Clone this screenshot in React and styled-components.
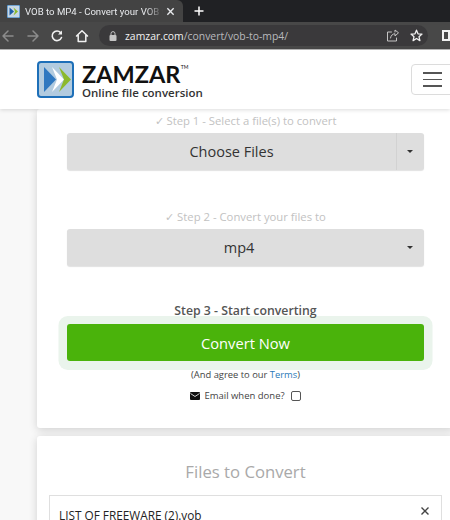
import React from "react";
import styled, { createGlobalStyle } from "styled-components";

const Global = createGlobalStyle`
  html, body { margin: 0; padding: 0; background: #f8f8f8; }
  body { width: 450px; height: 520px; overflow: hidden; font-family: "Open Sans", "Noto Sans", sans-serif; }
  * { box-sizing: border-box; }
`;

const Page = styled.div`
  width: 450px;
  height: 520px;
  overflow: hidden;
  display: flex;
  flex-direction: column;
`;

const TabStrip = styled.div`
  height: 22px;
  flex: none;
  background: #202124;
  display: flex;
  align-items: center;
`;

const Tab = styled.div`
  width: 183px;
  height: 22px;
  background: #434343;
  border-top-right-radius: 6px;
  display: flex;
  align-items: center;
  padding: 0 8px 0 7px;
  color: #e8eaed;
  font-family: "Roboto", sans-serif;
  font-size: 9.6px;
  white-space: nowrap;
`;

const TabTitle = styled.span`
  flex: 1;
  margin-left: 5px;
  margin-right: 3px;
  overflow: hidden;
  mask-image: linear-gradient(to right, #000 88%, transparent);
`;

const NewTab = styled.div`
  width: 32px;
  display: flex;
  justify-content: center;
  color: #fff;
`;

const Toolbar = styled.div`
  height: 28px;
  flex: none;
  background: #484848;
  border-bottom: 1px solid #b8b8b8;
  display: flex;
  align-items: center;
`;

const NavIcons = styled.div`
  width: 99px;
  flex: none;
  display: flex;
  align-items: center;
  gap: 10.5px;
  padding-left: 1px;
`;

const Address = styled.div`
  width: 329px;
  height: 21px;
  flex: none;
  border-radius: 11px;
  background: #3a393b;
  display: flex;
  align-items: center;
  padding: 0 5px 0 10px;
  font-size: 10.4px;
  color: #b9babd;
`;

const Url = styled.span`
  flex: 1;
  margin-left: 8px;
  b { color: #f1f1f1; font-weight: 400; }
`;

const AddressIcons = styled.div`
  display: flex;
  align-items: center;
  gap: 11px;
`;

const Side = styled.div`
  width: 10px;
  height: 11px;
  margin-left: 14px;
  flex: none;
  border: 2px solid #f1f1f1;
  border-right-width: 4px;
  background: #484848;
`;

const Header = styled.header`
  height: 59px;
  flex: none;
  background: #fff;
  box-shadow: 0 1px 4px rgba(0, 0, 0, 0.14);
  display: flex;
  align-items: center;
  justify-content: space-between;
  padding-left: 37px;
  position: relative;
  z-index: 2;
`;

const Brand = styled.div`
  display: flex;
  align-items: center;
  gap: 8px;
`;

const BrandText = styled.div`
  display: flex;
  flex-direction: column;
  margin-top: 2px;
  color: #111;
`;

const BrandName = styled.div`
  font-family: "Lato", sans-serif;
  font-weight: 700;
  font-size: 23.5px;
  line-height: 24px;
  position: relative;
  width: fit-content;
  sup {
    font-size: 5px;
    line-height: 6px;
    position: absolute;
    top: 2px;
    right: -8px;
    font-weight: 400;
  }
`;

const BrandTag = styled.div`
  font-family: "Open Sans", sans-serif;
  font-weight: 600;
  font-size: 11.5px;
  line-height: 13px;
  color: #333;
`;

const MenuButton = styled.div`
  width: 50px;
  height: 31px;
  margin-right: -11px;
  border: 1px solid #dcdcdc;
  border-radius: 4px;
  display: flex;
  flex-direction: column;
  justify-content: center;
  gap: 5px;
  padding-left: 11px;
  span { display: block; width: 19px; height: 1.5px; background: #555; }
`;

const Cards = styled.main`
  width: 417px;
  margin-left: 37px;
  display: flex;
  flex-direction: column;
  gap: 8px;
`;

const Card = styled.section`
  background: #fff;
  border-radius: 3px;
  box-shadow: 0 2px 9px rgba(0, 0, 0, 0.16);
`;

const ConvertCard = styled(Card)`
  height: 319px;
  padding: 4px 30px 0;
  display: flex;
  flex-direction: column;
`;

const StepLabel = styled.div`
  text-align: center;
  font-size: 11.3px;
  line-height: 16px;
  color: #c2c2c2;
  margin-top: ${(p) => p.$top}px;
  margin-bottom: 4px;
`;

const StepThree = styled.div`
  text-align: center;
  font-size: 12.3px;
  font-weight: 600;
  line-height: 16px;
  color: #555;
  margin-top: 37px;
  margin-bottom: 5px;
  position: relative;
  z-index: 1;
`;

const Select = styled.div`
  height: 37px;
  background: #dedede;
  border-radius: 3px;
  box-shadow: 0 1px 1px rgba(0, 0, 0, 0.12);
  display: flex;
  align-items: stretch;
  color: #333;
  font-size: 14.5px;
`;

const SelectLabel = styled.div`
  flex: 1;
  display: flex;
  align-items: center;
  justify-content: center;
`;

const Caret = styled.div`
  width: ${(p) => (p.$split ? "28px" : "13px")};
  border-left: ${(p) => (p.$split ? "1px solid #d2d2d2" : "none")};
  position: relative;
  &::after {
    content: "";
    position: absolute;
    right: 11px;
    top: 17px;
    border-top: 3px solid #333;
    border-left: 3px solid transparent;
    border-right: 3px solid transparent;
  }
`;

const ConvertButton = styled.div`
  height: 37px;
  background: #4ab30b;
  border-radius: 3px;
  box-shadow: 0 0.5px 0 8.5px #eaf4ec;
  color: #fff;
  font-size: 14.7px;
  display: flex;
  align-items: center;
  justify-content: center;
`;

const Terms = styled.div`
  margin-top: 6px;
  text-align: center;
  font-size: 9.4px;
  line-height: 15px;
  color: #444;
  position: relative;
  a { color: #2a7ab8; text-decoration: none; }
`;

const EmailRow = styled.div`
  margin-top: 6px;
  display: flex;
  align-items: center;
  justify-content: center;
  gap: 4px;
  font-size: 9.5px;
  line-height: 15px;
  color: #444;
`;

const Check = styled.span`
  width: 10px;
  height: 10px;
  margin-left: 2px;
  border: 1px solid #555;
  border-radius: 2px;
  background: #fff;
`;

const FilesCard = styled(Card)`
  height: 120px;
  padding: 26px 12px 0;
`;

const FilesTitle = styled.h2`
  margin: 0;
  text-align: center;
  font-size: 16.7px;
  font-weight: 400;
  line-height: 20px;
  color: #a9a9a9;
`;

const FileRow = styled.div`
  margin-top: 13px;
  height: 60px;
  border: 1px solid #dfdfdf;
  display: flex;
  align-items: flex-start;
  justify-content: space-between;
  padding: 10px 11px 0 9px;
  font-size: 11.8px;
  line-height: 18px;
  color: #222;
`;

const Logo = () => (
  <svg width="37" height="37" viewBox="0 0 37 37">
    <rect x="1" y="1" width="35" height="35" rx="3" fill="#b2cbdf" stroke="#1d6fb8" strokeWidth="2" />
    <path d="M7 6 L19 18.5 L7 31 Z" fill="#2f78c0" />
    <path d="M15 6 L27 18.5 L15 31 L20 18.5 Z" fill="#fff" />
    <path d="M22 6 L34 18.5 L22 31 L27 18.5 Z" fill="#8cb92c" />
  </svg>
);

const Favicon = () => (
  <svg width="13" height="13" viewBox="0 0 13 13">
    <rect width="13" height="13" rx="1" fill="#c8d8e6" stroke="#1d6fb8" />
    <path d="M2.5 2.5 L7 6.5 L2.5 10.5 Z" fill="#1f5fa8" />
    <path d="M6.5 2.5 L11 6.5 L6.5 10.5 L8 6.5 Z" fill="#8cb92c" />
  </svg>
);

const stroke = { fill: "none", strokeLinecap: "round", strokeLinejoin: "round" };

const Arrow = ({ flip }) => (
  <svg width="14" height="14" viewBox="0 0 14 14" style={flip ? { transform: "scaleX(-1)" } : undefined}>
    <path d="M2 7 H12 M7 2 L2 7 L7 12" stroke="#8c8c8c" strokeWidth="1.5" {...stroke} />
  </svg>
);

const Reload = () => (
  <svg width="14" height="14" viewBox="0 0 14 14">
    <path d="M11.5 8.5 A4.8 4.8 0 1 1 10.6 3.6" stroke="#f1f1f1" strokeWidth="1.6" {...stroke} />
    <path d="M12 1.5 V5.5 H8 Z" fill="#f1f1f1" />
  </svg>
);

const Home = () => (
  <svg width="14" height="14" viewBox="0 0 14 14">
    <path d="M1.5 7 L7 1.8 L12.5 7 M3.2 6 V12.5 H10.8 V6" stroke="#f1f1f1" strokeWidth="1.5" {...stroke} />
  </svg>
);

const Lock = () => (
  <svg width="8" height="10" viewBox="0 0 8 10">
    <rect x="0.5" y="4" width="7" height="6" rx="1" fill="#c4c4c4" />
    <path d="M2 4 V2.6 A2 2 0 0 1 6 2.6 V4" stroke="#c4c4c4" strokeWidth="1" fill="none" />
  </svg>
);

const Share = () => (
  <svg width="13" height="13" viewBox="0 0 13 13">
    <path d="M5.5 3 H1.5 V12 H10.5 V9 M4.5 9 C5 6 7 4.8 9 4.8 V7 L12.5 3.8 L9 1 V3" stroke="#c4c4c4" strokeWidth="1" {...stroke} />
  </svg>
);

const Star = () => (
  <svg width="13" height="13" viewBox="0 0 13 13">
    <path d="M6.5 1.2 L8 4.8 L12 5.1 L9 7.7 L9.9 11.6 L6.5 9.5 L3.1 11.6 L4 7.7 L1 5.1 L5 4.8 Z" stroke="#f1f1f1" strokeWidth="1.3" {...stroke} />
  </svg>
);

const Close = ({ size, color, width }) => (
  <svg width={size} height={size} viewBox="0 0 10 10">
    <path d="M1.5 1.5 L8.5 8.5 M8.5 1.5 L1.5 8.5" stroke={color} strokeWidth={width} fill="none" />
  </svg>
);

const Plus = () => (
  <svg width="10" height="10" viewBox="0 0 10 10">
    <path d="M5 0.5 V9.5 M0.5 5 H9.5" stroke="#fff" strokeWidth="1.5" />
  </svg>
);

const Mail = () => (
  <svg width="10" height="8" viewBox="0 0 10 8">
    <rect width="10" height="8" rx="1" fill="#111" />
    <path d="M0.5 1.5 L5 4.5 L9.5 1.5" stroke="#fff" strokeWidth="0.8" fill="none" />
  </svg>
);

export default function App() {
  return (
    <Page>
      <Global />
      <TabStrip>
        <Tab>
          <Favicon />
          <TabTitle>VOB to MP4 - Convert your VOB to</TabTitle>
          <Close size={9} color="#e8eaed" width={1.5} />
        </Tab>
        <NewTab>
          <Plus />
        </NewTab>
      </TabStrip>
      <Toolbar>
        <NavIcons>
          <Arrow />
          <Arrow flip />
          <Reload />
          <Home />
        </NavIcons>
        <Address>
          <Lock />
          <Url>
            <b>zamzar.com</b>/convert/vob-to-mp4/
          </Url>
          <AddressIcons>
            <Share />
            <Star />
          </AddressIcons>
        </Address>
        <Side />
      </Toolbar>
      <Header>
        <Brand>
          <Logo />
          <BrandText>
            <BrandName>
              ZAMZAR<sup>TM</sup>
            </BrandName>
            <BrandTag>Online file conversion</BrandTag>
          </BrandText>
        </Brand>
        <MenuButton>
          <span />
          <span />
          <span />
        </MenuButton>
      </Header>
      <Cards>
        <ConvertCard>
          <StepLabel $top={0}>✓ Step 1 - Select a file(s) to convert</StepLabel>
          <Select>
            <SelectLabel>Choose Files</SelectLabel>
            <Caret $split />
          </Select>
          <StepLabel $top={39}>✓ Step 2 - Convert your files to</StepLabel>
          <Select>
            <SelectLabel>mp4</SelectLabel>
            <Caret />
          </Select>
          <StepThree>Step 3 - Start converting</StepThree>
          <ConvertButton>Convert Now</ConvertButton>
          <Terms>
            (And agree to our <a href="#terms">Terms</a>)
          </Terms>
          <EmailRow>
            <Mail />
            Email when done?
            <Check />
          </EmailRow>
        </ConvertCard>
        <FilesCard>
          <FilesTitle>Files to Convert</FilesTitle>
          <FileRow>
            LIST OF FREEWARE (2).vob
            <Close size={10} color="#444" width={1.4} />
          </FileRow>
        </FilesCard>
      </Cards>
    </Page>
  );
}
